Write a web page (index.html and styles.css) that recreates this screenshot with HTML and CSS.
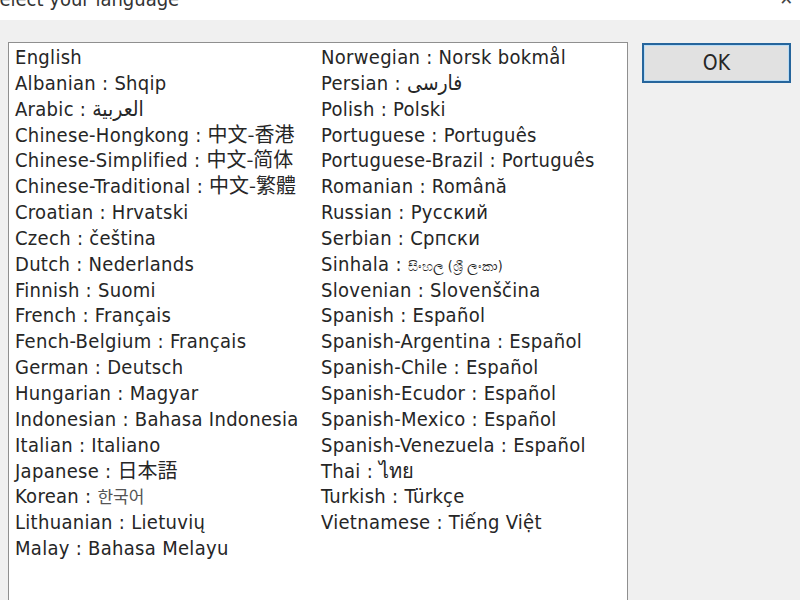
FILE: index.html
```html
<!DOCTYPE html>
<html lang="en">

<head>
  <meta charset="UTF-8">
  <meta name="viewport" content="width=device-width, initial-scale=1.0">
  <title>Select your language</title>
  <link rel="stylesheet" href="styles.css">
</head>

<body>

  <!-- 标题栏 -->
  <div class="titlebar">
    <span class="title">Select your language</span>
    <span class="close">&#x2715;</span>
  </div>

  <div class="dialog">

    <!-- 语言列表 -->
    <div class="listbox">
      <ul class="col">
        <li>English</li>
        <li>Albanian : Shqip</li>
        <li>Arabic : <span lang="ar">العربية</span></li>
        <li>Chinese-Hongkong : <span lang="zh-HK">中文-香港</span></li>
        <li>Chinese-Simplified : <span lang="zh-CN">中文-简体</span></li>
        <li>Chinese-Traditional : <span lang="zh-TW">中文-繁體</span></li>
        <li>Croatian : Hrvatski</li>
        <li>Czech : čeština</li>
        <li>Dutch : Nederlands</li>
        <li>Finnish : Suomi</li>
        <li>French : Français</li>
        <li>Fench-Belgium : Français</li>
        <li>German : Deutsch</li>
        <li>Hungarian : Magyar</li>
        <li>Indonesian : Bahasa Indonesia</li>
        <li>Italian : Italiano</li>
        <li>Japanese : <span lang="ja">日本語</span></li>
        <li>Korean : <span lang="ko">한국어</span></li>
        <li>Lithuanian : Lietuvių</li>
        <li>Malay : Bahasa Melayu</li>
      </ul>
      <ul class="col">
        <li>Norwegian : Norsk bokmål</li>
        <li>Persian : <span lang="fa">فارسی</span></li>
        <li>Polish : Polski</li>
        <li>Portuguese : Português</li>
        <li>Portuguese-Brazil : Português</li>
        <li>Romanian : Română</li>
        <li>Russian : Русский</li>
        <li>Serbian : Српски</li>
        <li>Sinhala : <span class="small">සිංහල (ශ්‍රී ලංකා)</span></li>
        <li>Slovenian : Slovenščina</li>
        <li>Spanish : Español</li>
        <li>Spanish-Argentina : Español</li>
        <li>Spanish-Chile : Español</li>
        <li>Spanish-Ecudor : Español</li>
        <li>Spanish-Mexico : Español</li>
        <li>Spanish-Venezuela : Español</li>
        <li>Thai : <span lang="th">ไทย</span></li>
        <li>Turkish : Türkçe</li>
        <li>Vietnamese : Tiếng Việt</li>
      </ul>
    </div>

    <!-- 按钮 -->
    <div class="buttons">
      <button class="ok">OK</button>
    </div>

  </div>

</body>

</html>
```

FILE: styles.css
```css
* {
  margin: 0;
  padding: 0;
}

body {
  background-color: #f0f0f0;
  font-family: "DejaVu Sans Condensed", "DejaVu Sans", "Noto Sans CJK SC", sans-serif;
  color: #262626;
  overflow: hidden;
  height: 600px;
}

/* 标题栏 */
.titlebar {
  height: 20px;
  background-color: #fff;
  display: flex;
  justify-content: space-between;
  overflow: hidden;
}

.title {
  font-size: 20px;
  line-height: 22px;
  margin-top: -12px;
  margin-left: -12px;
  color: #333;
}

.close {
  font-size: 18px;
  line-height: 18px;
  margin-top: -10px;
  margin-right: 7px;
  color: #444;
}

.dialog {
  display: flex;
  align-items: flex-start;
  padding: 22px 9px 0 8px;
}

/* 列表框 */
.listbox {
  width: 619px;
  height: 600px;
  background-color: #fff;
  border: 1px solid #8f8f8f;
  display: flex;
  padding: 2px 0 0 6px;
  font-size: 20px;
  letter-spacing: 0.3px;
}

.col {
  list-style: none;
  line-height: 25.85px;
  white-space: nowrap;
}

.col li {
  height: 25.85px;
}

/* 其他文字的span不撑高行 */
.col span {
  line-height: 1;
  letter-spacing: 0;
}

.col:first-child {
  width: 306px;
}

[lang="zh-HK"],
[lang="zh-TW"] {
  font-family: "Noto Sans CJK TC", sans-serif;
}

[lang="zh-CN"] {
  font-family: "Noto Sans CJK SC", sans-serif;
}

[lang="ja"] {
  font-family: "Noto Sans CJK JP", sans-serif;
}

[lang="ko"] {
  font-family: "Noto Sans CJK KR", sans-serif;
  font-size: 17px;
  color: #555;
}

[lang="ar"],
[lang="fa"] {
  font-size: 21px;
}

.small {
  font-size: 14px;
}

/* 右侧按钮 */
.buttons {
  margin-left: 14px;
  padding-top: 1px;
}

.ok {
  width: 149px;
  height: 40px;
  background-color: #e1e1e1;
  border: 2px solid #26659c;
  box-shadow: inset 0 0 0 1px #b9dcf5;
  font-family: "DejaVu Sans Condensed", "DejaVu Sans", sans-serif;
  font-size: 21px;
  color: #262626;
}
```
